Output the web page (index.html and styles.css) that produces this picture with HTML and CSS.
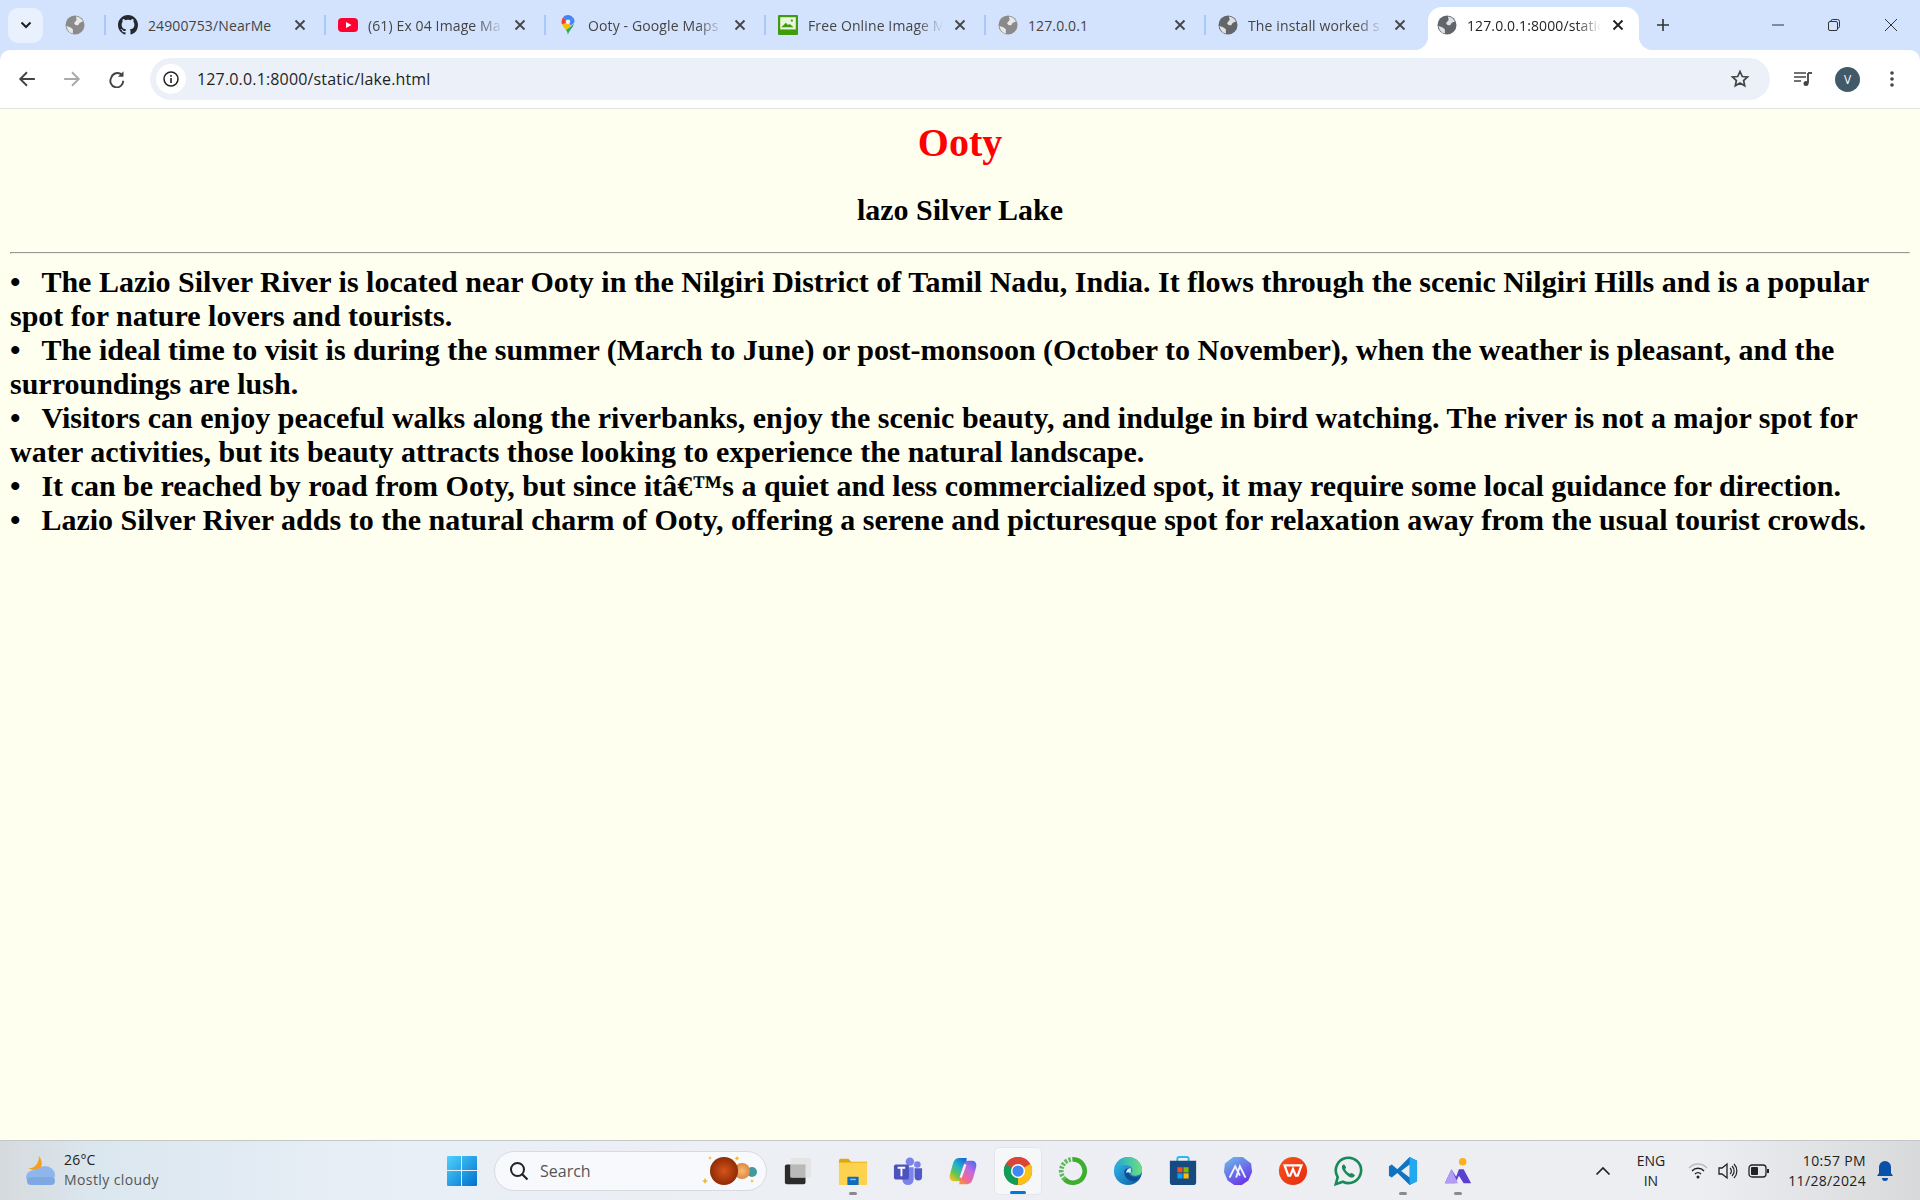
FILE: index.html
```html
<!DOCTYPE html>
<html lang="en">
<head>
    <meta charset="UTF-8">
    <title>127.0.0.1:8000/static/lake.html</title>
    <link rel="stylesheet" href="styles.css">
</head>
<body>
    <svg class="defs" width="0" height="0">
        <symbol id="globe" viewBox="0 0 20 20">
            <circle cx="10" cy="10" r="9.500" fill="currentColor"/>
            <path d="M11 1.500c3 .5 5.500 2 7 5-2 1-3.500 .5-4 2.500s-3.500 1.500-4.500 0 1.500-2.500 2-4-1-2.500-.5-3.500zM1.500 11c2 .5 4 1 6 3 1 1 0 2.500 .5 4.500-3.500-.5-6-3.500-6.500-7.500z" fill="#fff" opacity="0.8"/>
        </symbol>
        <symbol id="cross" viewBox="0 0 12 12">
            <path d="M1.500 1.500l9 9M10.500 1.500l-9 9" stroke="currentColor" stroke-width="1.800" fill="none"/>
        </symbol>
    </svg>

    <header class="browser-top">
        <div class="tabstrip">
            <div class="tab-search">
                <svg width="12" height="8" viewBox="0 0 12 8"><path d="M1.500 1.500L6 6l4.500-4.500" stroke="#1f1f1f" stroke-width="2" fill="none"/></svg>
            </div>
            <div class="tab-pinned"><svg class="fav globe-icon"><use href="#globe"/></svg></div>

            <div class="tab">
                <svg class="fav" viewBox="0 0 16 16"><path fill="#24292f" d="M8 0C3.580 0 0 3.580 0 8c0 3.540 2.290 6.530 5.470 7.590.4.070.55-.17.55-.38 0-.19-.01-.82-.01-1.490-2.010.37-2.530-.49-2.690-.94-.09-.23-.48-.94-.82-1.130-.28-.15-.68-.52-.01-.53.63-.01 1.080.58 1.230.82.72 1.210 1.870.87 2.330.66.070-.52.28-.87.51-1.070-1.780-.2-3.640-.89-3.640-3.950 0-.87.31-1.590.82-2.150-.08-.2-.36-1.020.08-2.120 0 0 .67-.21 2.200.82.64-.18 1.320-.27 2-.27s1.360.09 2 .27c1.530-1.040 2.200-.82 2.200-.82.44 1.100.16 1.920.08 2.120.51.56.82 1.270.82 2.150 0 3.070-1.870 3.750-3.650 3.950.29.25.54.73.54 1.480 0 1.070-.01 1.930-.01 2.200 0 .21.15.46.55.38A8.010 8.010 0 0016 8c0-4.420-3.580-8-8-8z"/></svg>
                <span class="tab-title plain">24900753/NearMe</span>
                <svg class="tab-close"><use href="#cross"/></svg>
            </div>
            <div class="tab">
                <svg class="fav" viewBox="0 0 20 20"><rect x="0" y="3" width="20" height="14" rx="4" fill="#ff0033"/><path d="M8 7l5.500 3L8 13z" fill="#fff"/></svg>
                <span class="tab-title">(61) Ex 04 Image Ma</span>
                <svg class="tab-close"><use href="#cross"/></svg>
            </div>
            <div class="tab">
                <svg class="fav" viewBox="0 0 20 20">
                    <path d="M10 0c-2 0-3.700.9-4.800 2.300L10 7.500l5-5C13.800 1 12 0 10 0z" fill="#4285f4"/>
                    <path d="M5.200 2.300A6.500 6.500 0 003.500 6.800c0 1 .2 1.800.6 2.600l5.900-2z" fill="#ea4335"/>
                    <path d="M15 2.500l-5 5 3 3 3-2.500c.3-.7.500-1.400.500-1.700 0-1.500-.6-2.800-1.500-3.800z" fill="#4285f4"/>
                    <path d="M4.100 9.400C5 11.500 6.800 13.300 8 15l5-4.500-3-3z" fill="#fbbc04"/>
                    <path d="M8 15c.9 1.300 1.700 2.600 2 5 .4-2.500 1.500-4 2.700-5.500 1.200-1.500 2.500-3 3.300-5.500L8 15z" fill="#34a853"/>
                    <circle cx="10" cy="6.800" r="2.300" fill="#fff" opacity="0.9"/>
                </svg>
                <span class="tab-title">Ooty - Google Maps</span>
                <svg class="tab-close"><use href="#cross"/></svg>
            </div>
            <div class="tab">
                <svg class="fav" viewBox="0 0 18 18"><rect width="18" height="18" rx="1" fill="#3f9c0a"/><rect x="2" y="2" width="14" height="11" fill="#e9f5de"/><path d="M3 11l4-4 2 2 1.500-1 3.500 3z" fill="#3f9c0a"/><circle cx="12.500" cy="5" r="1" fill="#3f9c0a"/></svg>
                <span class="tab-title">Free Online Image M</span>
                <svg class="tab-close"><use href="#cross"/></svg>
            </div>
            <div class="tab">
                <svg class="fav globe-icon"><use href="#globe"/></svg>
                <span class="tab-title plain">127.0.0.1</span>
                <svg class="tab-close"><use href="#cross"/></svg>
            </div>
            <div class="tab">
                <svg class="fav globe-icon dark"><use href="#globe"/></svg>
                <span class="tab-title">The install worked s</span>
                <svg class="tab-close"><use href="#cross"/></svg>
            </div>
            <div class="tab active">
                <svg class="fav globe-icon dark"><use href="#globe"/></svg>
                <span class="tab-title">127.0.0.1:8000/static</span>
                <svg class="tab-close"><use href="#cross"/></svg>
            </div>

            <svg class="new-tab" width="14" height="14" viewBox="0 0 14 14"><path d="M7 1v12M1 7h12" stroke="#333" stroke-width="1.600"/></svg>

            <div class="window-btns">
                <svg width="12" height="12" viewBox="0 0 12 12"><path d="M0 6h12" stroke="#333"/></svg>
                <svg width="12" height="12" viewBox="0 0 12 12"><rect x="0.500" y="2.500" width="9" height="9" rx="1.500" fill="none" stroke="#333"/><path d="M3 2.500v-.500a1.500 1.500 0 011.500-1.500h5a2 2 0 012 2v5a1.500 1.500 0 01-1.500 1.500" fill="none" stroke="#333"/></svg>
                <svg width="14" height="14" viewBox="0 0 14 14"><path d="M1 1l12 12M13 1L1 13" stroke="#333"/></svg>
            </div>
        </div>

        <div class="toolbar">
            <svg class="nav-btn" viewBox="0 0 16 16"><path d="M15 8H2M8 2L2 8l6 6" fill="none" stroke="#444" stroke-width="1.700"/></svg>
            <svg class="nav-btn" viewBox="0 0 16 16"><path d="M1 8h13M8 2l6 6-6 6" fill="none" stroke="#aaa" stroke-width="1.700"/></svg>
            <svg class="nav-btn" viewBox="0 0 16 16"><path d="M13.500 9.500A5.700 5.700 0 112.800 7 5.700 5.700 0 0112.500 4.500" fill="none" stroke="#444" stroke-width="1.700"/><path d="M13.800 1v5h-5z" fill="#444"/></svg>
            <div class="omnibox">
                <span class="site-info">
                    <svg width="16" height="16" viewBox="0 0 16 16"><circle cx="8" cy="8" r="7" fill="none" stroke="#222" stroke-width="1.500"/><path d="M8 7v5M8 4v1.800" stroke="#222" stroke-width="1.600"/></svg>
                </span>
                <span class="url">127.0.0.1:8000/static/lake.html</span>
                <svg class="star" width="20" height="20" viewBox="0 0 20 20"><path d="M10 2.500l2.300 5 5.200.5-3.900 3.500 1.100 5.300-4.700-2.700-4.700 2.700 1.100-5.300L2.500 8l5.200-.5z" fill="none" stroke="#444" stroke-width="1.700"/></svg>
            </div>
            <svg class="tool-icon" width="20" height="18" viewBox="0 0 20 18"><path d="M1 3h12M1 7h12M1 11h7" stroke="#444" stroke-width="1.600"/><path d="M15 3v10" stroke="#444" stroke-width="1.800"/><path d="M15 3h4" stroke="#444" stroke-width="1.800"/><circle cx="13" cy="13.500" r="2.500" fill="#444"/></svg>
            <span class="avatar">V</span>
            <svg class="menu-dots" width="4" height="18" viewBox="0 0 4 18"><circle cx="2" cy="3" r="1.800" fill="#444"/><circle cx="2" cy="9" r="1.800" fill="#444"/><circle cx="2" cy="15" r="1.800" fill="#444"/></svg>
        </div>
    </header>

    <main class="page">
        <h1>Ooty</h1>
        <h2>lazo Silver Lake</h2>
        <hr>
        <p class="notes">
            <span class="dot">&bull;&nbsp;&nbsp;&nbsp;</span>The Lazio Silver River is located near Ooty in the Nilgiri District of Tamil Nadu, India. It flows through the scenic Nilgiri Hills and is a popular spot for nature lovers and tourists.<br>
            <span class="dot">&bull;&nbsp;&nbsp;&nbsp;</span>The ideal time to visit is during the summer (March to June) or post-monsoon (October to November), when the weather is pleasant, and the surroundings are lush.<br>
            <span class="dot">&bull;&nbsp;&nbsp;&nbsp;</span>Visitors can enjoy peaceful walks along the riverbanks, enjoy the scenic beauty, and indulge in bird watching. The river is not a major spot for water activities, but its beauty attracts those looking to experience the natural landscape.<br>
            <span class="dot">&bull;&nbsp;&nbsp;&nbsp;</span>It can be reached by road from Ooty, but since itâ€™s a quiet and less commercialized spot, it may require some local guidance for direction.<br>
            <span class="dot">&bull;&nbsp;&nbsp;&nbsp;</span>Lazio Silver River adds to the natural charm of Ooty, offering a serene and picturesque spot for relaxation away from the usual tourist crowds.
        </p>
    </main>

    <footer class="taskbar">
        <div class="weather">
            <svg width="32" height="32" viewBox="0 0 32 32">
                <path d="M15 1c3 4 4 9 1 13-3 2-9 1-12-1 5 1 11-3 11-12z" fill="#f3a11f"/>
                <ellipse cx="11" cy="22" rx="9" ry="7" fill="#8fb6ea"/>
                <ellipse cx="21" cy="20" rx="10" ry="9" fill="#8fb6ea"/>
                <rect x="3" y="22" width="28" height="8" rx="4" fill="#7ea8e4"/>
            </svg>
            <div class="weather-text">
                <span class="temp">26°C</span>
                <span class="cond">Mostly cloudy</span>
            </div>
        </div>

        <div class="apps">
            <svg class="win-logo" width="30" height="30" viewBox="0 0 30 30">
                <defs><linearGradient id="winGrad" x1="0" y1="0" x2="1" y2="1"><stop offset="0" stop-color="#4fd2fb"/><stop offset="1" stop-color="#0070d0"/></linearGradient></defs>
                <path d="M1 0h13v14H0V1a1 1 0 011-1zM15 0h14a1 1 0 011 1v13H15zM0 15h14v15H1a1 1 0 01-1-1zM15 15h15v14a1 1 0 01-1 1H15z" fill="url(#winGrad)"/>
            </svg>
            <div class="search-pill">
                <svg width="20" height="20" viewBox="0 0 20 20"><circle cx="8.500" cy="8.500" r="6.500" fill="none" stroke="#222" stroke-width="2"/><path d="M13 13l5.500 5.500" stroke="#222" stroke-width="2.200"/></svg>
                <span class="search-label">Search</span>
                <svg class="planets" width="60" height="36" viewBox="0 0 60 36">
                    <defs>
                        <radialGradient id="marsGrad"><stop offset="0" stop-color="#d8521a"/><stop offset="1" stop-color="#8e2c04"/></radialGradient>
                        <radialGradient id="peachGrad"><stop offset="0" stop-color="#f7bb78"/><stop offset="1" stop-color="#e0873e"/></radialGradient>
                    </defs>
                    <circle cx="52" cy="19" r="5" fill="#3f9aa0"/>
                    <circle cx="42" cy="18" r="8" fill="url(#peachGrad)"/>
                    <circle cx="24" cy="18" r="14" fill="url(#marsGrad)"/>
                    <path d="M5 25l1 2 2 1-2 1-1 2-1-2-2-1 2-1zM37 3l.8 1.600 1.600.8-1.600.8-.8 1.600-.8-1.600-1.600-.8 1.600-.8zM52 26l.7 1.400 1.300.6-1.300.6-.7 1.400-.7-1.400-1.300-.6 1.300-.6zM10 3l.7 1.400 1.300.6-1.300.6-.7 1.400-.7-1.400-1.300-.6 1.300-.6z" fill="#eeb92e"/>
                </svg>
            </div>
            <div class="app-row">
                <div class="app"><svg viewBox="0 0 32 32"><rect x="2" y="9" width="22" height="21" rx="2" fill="#2b2b2b"/><rect x="8" y="2" width="22" height="21" rx="2" fill="#e4e4e4"/><rect x="8" y="9" width="16" height="14" fill="#b9b9b9"/></svg></div>
                <div class="app open"><svg viewBox="0 0 32 32"><path d="M1 5a2 2 0 012-2h8l3 3h17v6H1z" fill="#e5a50a"/><rect x="1" y="7" width="30" height="24" rx="1" fill="#fcd24f"/><rect x="10" y="22" width="12" height="9" rx="1" fill="#0f6cbd"/><path d="M13 25h6" stroke="#7ec4f5" stroke-width="1.500"/></svg></div>
                <div class="app"><svg viewBox="0 0 32 32"><circle cx="26" cy="9" r="3.500" fill="#7b83eb"/><circle cx="18" cy="6" r="4.500" fill="#7b83eb"/><path d="M10 12h12v13a6 6 0 01-12 0z" fill="#7b83eb"/><path d="M23 13h8v9a4 4 0 01-8 0z" fill="#5059c9"/><rect x="1" y="9" width="16" height="16" rx="2" fill="#4b53bc"/><path d="M5 12.500h8M9 12.500v9" stroke="#fff" stroke-width="2"/></svg></div>
                <div class="app"><svg viewBox="0 0 32 32">
                    <defs><linearGradient id="copA" x1="0.800" y1="0" x2="0.200" y2="1"><stop offset="0" stop-color="#1768d8"/><stop offset="0.400" stop-color="#1fb6c8"/><stop offset="0.700" stop-color="#62c554"/><stop offset="1" stop-color="#f6c21a"/></linearGradient><linearGradient id="copB" x1="0.800" y1="0" x2="0.200" y2="1"><stop offset="0" stop-color="#4f6ae8"/><stop offset="0.400" stop-color="#c66ae0"/><stop offset="0.800" stop-color="#f26a8c"/><stop offset="1" stop-color="#f7913c"/></linearGradient></defs>
                    <path d="M20 2H12C8 2 6 5 5 9L2 20c-1 4 1 7 4 7h4c3 0 5-2 6-5l3-11c1-4 .5-7 1-9z" fill="url(#copA)"/>
                    <path d="M12 30h8c4 0 6-3 7-7l3-11c1-4-1-7-4-7h-4c-3 0-5 2-6 5l-3 11c-1 4-.5 7-1 9z" fill="url(#copB)"/>
                    <path d="M18.500 9l-5 14" stroke="#f6f1f8" stroke-width="2.500" fill="none"/>
                </svg></div>
                <div class="app current"><svg viewBox="0 0 32 32">
                    <circle cx="16" cy="16" r="15" fill="#db4437"/>
                    <path d="M16 16L29 8.500A15 15 0 0116 31z" fill="#fbc116"/>
                    <path d="M16 16L16 31A15 15 0 013 8.500z" fill="#109d58"/>
                    <path d="M3 8.500A15 15 0 0129 8.500H16z" fill="#db4437"/>
                    <circle cx="16" cy="16" r="7.500" fill="#fff"/><circle cx="16" cy="16" r="6" fill="#4285f4"/>
                </svg></div>
                <div class="app"><svg viewBox="0 0 32 32">
                    <path d="M16 3.500a12.500 12.500 0 11-9 21.200" fill="none" stroke="#3fae2f" stroke-width="5"/>
                    <path d="M7 24.700A12.500 12.500 0 0116 3.500" fill="none" stroke="#5db85a" stroke-width="5" stroke-dasharray="2.500 1.500"/>
                </svg></div>
                <div class="app"><svg viewBox="0 0 32 32">
                    <defs><linearGradient id="edgeA" x1="0" y1="0" x2="1" y2="1"><stop offset="0" stop-color="#35c1f1"/><stop offset="1" stop-color="#0b57a4"/></linearGradient><linearGradient id="edgeB" x1="0" y1="0.500" x2="1" y2="0.500"><stop offset="0" stop-color="#1fa8d8"/><stop offset="1" stop-color="#6fe07a"/></linearGradient></defs>
                    <circle cx="16" cy="16" r="15" fill="url(#edgeA)"/>
                    <path d="M12 17c0 6 6 11 12 10 2-1 4-3 6-6-3 2-8 2-11 0-3-2-3-6-2-8-2 0-5 1-5 4z" fill="#0c4f94"/>
                    <path d="M2 13C4 5 10 1 16 1c8 0 15 6 15 14 0 4-3 6-7 6-3 0-5-1-5-3 3-2 2-7-3-8-6-1-11 0-14 3z" fill="url(#edgeB)"/>
                    <path d="M19 18c-2-1-4-1-5 0 0-3 2-5 5-5z" fill="#dff1f7"/>
                </svg></div>
                <div class="app"><svg viewBox="0 0 32 32"><path d="M10 6V3a2 2 0 012-2h8a2 2 0 012 2v3" fill="none" stroke="#30b5ee" stroke-width="2"/><path d="M2 5h28v23a3 3 0 01-3 3H5a3 3 0 01-3-3z" fill="#174a80"/><rect x="10" y="12" width="5.500" height="5.500" fill="#f25022"/><rect x="16.500" y="12" width="5.500" height="5.500" fill="#7fba00"/><rect x="10" y="18.500" width="5.500" height="5.500" fill="#00a4ef"/><rect x="16.500" y="18.500" width="5.500" height="5.500" fill="#ffb900"/></svg></div>
                <div class="app"><svg viewBox="0 0 32 32">
                    <defs><linearGradient id="genA" x1="0" y1="0" x2="0.600" y2="1"><stop offset="0" stop-color="#6cc0ea"/><stop offset="1" stop-color="#6a38e8"/></linearGradient></defs>
                    <path d="M11 1h10l9 7 1 9-4 9-7 5h-8l-7-5-4-9 1-9z" fill="url(#genA)"/>
                    <path d="M7 23l6-12 5 10M14 23l4-12 6 12" fill="none" stroke="#eef4ff" stroke-width="2"/>
                </svg></div>
                <div class="app"><svg viewBox="0 0 32 32">
                    <defs><linearGradient id="wpsA" x1="0" y1="0" x2="1" y2="1"><stop offset="0" stop-color="#f7541d"/><stop offset="1" stop-color="#e72a10"/></linearGradient></defs>
                    <circle cx="16" cy="16" r="15" fill="url(#wpsA)"/>
                    <path d="M7 10h18l-4 11h-2l-3-7-3 7h-2z" fill="none" stroke="#fff" stroke-width="2.400"/>
                </svg></div>
                <div class="app"><svg viewBox="0 0 32 32"><path d="M3 30l2-7.500a13.500 13.500 0 115.500 5z" fill="none" stroke="#178a58" stroke-width="2.800"/><path d="M11 9c-2 1-2 4 0 7s6 7 9 7c2 0 4-2 3-3l-3-2-2 1c-2-1-4-3-5-5l1-2-2-3z" fill="#178a58"/></svg></div>
                <div class="app open"><svg viewBox="0 0 32 32"><path d="M23 1l8 4v22l-8 4-13-13-6 5-3-2v-10l3-2 6 5z" fill="#0e74c2"/><path d="M23 1l8 4v22l-8 4z" fill="#22a8ee"/><path d="M23 9l-9 7 9 7z" fill="#e9ecf1"/></svg></div>
                <div class="app open"><svg viewBox="0 0 32 32"><circle cx="21" cy="6" r="4" fill="#f8b21a"/><path d="M2 29l7-15 5 8 3-8 5 0 8 15H22l-5-8-4 8z" fill="#5a3fd0"/><path d="M9 14l7 15H2z" fill="#b29cf5"/></svg></div>
            </div>
        </div>

        <div class="tray">
            <svg width="16" height="10" viewBox="0 0 16 10"><path d="M1.500 8.500L8 2l6.500 6.500" fill="none" stroke="#222" stroke-width="1.700"/></svg>
            <div class="lang">ENG<br>IN</div>
            <svg class="tray-icon" width="20" height="18" viewBox="0 0 20 18"><path d="M1 6a12 12 0 0118 0" fill="none" stroke="#bbb" stroke-width="1.400"/><path d="M4 9a8 8 0 0112 0M7 12a4 4 0 016 0" fill="none" stroke="#222" stroke-width="1.400"/><circle cx="10" cy="15" r="1.500" fill="#222"/></svg>
            <svg class="tray-icon" width="20" height="18" viewBox="0 0 20 18"><path d="M1 6h3l5-4v14l-5-4H1z" fill="none" stroke="#222" stroke-width="1.300"/><path d="M12 6a4 4 0 010 6M14 4a7 7 0 010 10M16 2a10 10 0 010 14" fill="none" stroke="#222" stroke-width="1.200"/></svg>
            <svg class="tray-icon" width="22" height="14" viewBox="0 0 22 14"><rect x="1" y="1" width="17" height="12" rx="3" fill="none" stroke="#222" stroke-width="1.300"/><rect x="3" y="3" width="7" height="8" rx="1" fill="#222"/><rect x="19" y="5" width="2" height="4" fill="#222"/></svg>
            <div class="clock">10:57 PM<br>11/28/2024</div>
            <svg width="18" height="22" viewBox="0 0 18 22"><path d="M9 1a6 6 0 00-6 6v6l-2 3h16l-2-3V7a6 6 0 00-6-6z" fill="#0a4fa8"/><path d="M6 18a3 3 0 006 0z" fill="#0a4fa8"/></svg>
        </div>
    </footer>
</body>
</html>
```

FILE: styles.css
```css
html, body {
    height: 100%;
    margin: 0;
}

body {
    display: flex;
    flex-direction: column;
    overflow: hidden;
    font-family: "Liberation Serif", serif;
    background-color: ivory;
}

.defs {
    display: none;
}

/* browser top */
.browser-top {
    flex-shrink: 0;
    background-color: #d3e3fd;
}

.tabstrip {
    display: flex;
    align-items: center;
    height: 50px;
    padding-left: 8px;
    font-family: "Open Sans", sans-serif;
    font-size: 14px;
    letter-spacing: 0.12px;
    color: #444;
}

.tab-search {
    display: flex;
    align-items: center;
    justify-content: center;
    width: 35px;
    height: 35px;
    border-radius: 10px;
    background-color: #e9f0fe;
}

.tab-pinned {
    display: flex;
    align-items: center;
    justify-content: center;
    width: 61px;
    height: 36px;
    padding-left: 3px;
    box-sizing: border-box;
}

.fav {
    width: 20px;
    height: 20px;
    flex-shrink: 0;
}

.globe-icon {
    color: #8a8a8a;
}

.globe-icon.dark {
    color: #62666b;
}

.tab {
    display: flex;
    align-items: center;
    gap: 10px;
    width: 220px;
    height: 20px;
    flex-shrink: 0;
    padding: 0 18px 0 12px;
    box-sizing: border-box;
    border-left: 2px solid #a8c7fa;
}

.tab-title {
    flex: 1;
    margin-right: -8px;
    overflow: hidden;
    white-space: nowrap;
    mask-image: linear-gradient(to right, #000 76%, transparent 94%);
}

.tab-title.plain {
    mask-image: none;
}

.tab-close {
    width: 12px;
    height: 12px;
    flex-shrink: 0;
    color: #444;
}

.tab.active {
    position: relative;
    align-self: flex-end;
    width: 211px;
    height: 43px;
    margin-left: 4px;
    padding: 0 15px 7px 9px;
    border-left: 0;
    border-radius: 14px 14px 0 0;
    background-color: #fff;
    color: #1f1f1f;
}

.tab.active::before,
.tab.active::after {
    content: "";
    position: absolute;
    bottom: 0;
    width: 14px;
    height: 14px;
}

.tab.active::before {
    left: -14px;
    background: radial-gradient(circle at 0 0, transparent 14px, #fff 14.5px);
}

.tab.active::after {
    right: -14px;
    background: radial-gradient(circle at 100% 0, transparent 14px, #fff 14.5px);
}

.tab.active .tab-close {
    color: #1f1f1f;
}

.new-tab {
    margin-left: 17px;
}

.window-btns {
    display: flex;
    align-items: center;
    gap: 44px;
    margin-left: auto;
    padding-right: 22px;
}

.toolbar {
    display: flex;
    align-items: center;
    height: 59px;
    box-sizing: border-box;
    border-bottom: 1px solid #e1e3de;
    border-radius: 10px 10px 0 0;
    background-color: #fff;
}

.nav-btn {
    width: 18px;
    height: 18px;
    margin-left: 19px;
    margin-right: 8px;
}

.nav-btn:first-child {
    margin-left: 18px;
}

.omnibox {
    display: flex;
    align-items: center;
    width: 1620px;
    height: 42px;
    margin-left: 16px;
    border-radius: 21px;
    background-color: #ebf0f9;
}

.site-info {
    display: flex;
    align-items: center;
    justify-content: center;
    width: 30px;
    height: 30px;
    margin-left: 6px;
    border-radius: 50%;
    background-color: #fff;
}

.url {
    margin-left: 11px;
    font-family: "Open Sans", sans-serif;
    font-size: 16px;
    letter-spacing: 0.16px;
    color: #1f1f1f;
}

.star {
    margin-left: auto;
    margin-right: 20px;
}

.tool-icon {
    margin-left: 23px;
}

.avatar {
    display: flex;
    align-items: center;
    justify-content: center;
    width: 25px;
    height: 25px;
    margin-left: 22px;
    border-radius: 50%;
    background-color: #42596a;
    font-family: "Open Sans", sans-serif;
    font-size: 12px;
    color: #fff;
}

.menu-dots {
    margin-left: 30px;
}

/* page content */
.page {
    flex: 1;
    padding: 10px;
    overflow: hidden;
    background-color: ivory;
    color: #000;
}

h1 {
    margin: 0 0 27px;
    font-size: 40px;
    color: red;
    text-align: center;
}

h2 {
    margin: 25px 0;
    font-size: 30px;
    text-align: center;
}

hr {
    margin: 0 0 11px;
}

.notes {
    margin: 0;
    font-size: 30px;
    font-weight: bold;
}

.dot {
    letter-spacing: -0.4px;
}

/* windows taskbar */
.taskbar {
    display: flex;
    align-items: center;
    height: 60px;
    flex-shrink: 0;
    box-sizing: border-box;
    border-top: 1px solid #c3c6cb;
    background: linear-gradient(90deg, #d6dadd 0, #dbe7ef 100px, #e9eff7 400px, #eceff4 700px, #eceef2 1700px, #d8d9da 100%);
    font-family: "Open Sans", sans-serif;
    color: #222;
}

.weather {
    display: flex;
    align-items: center;
    gap: 8px;
    width: 447px;
    flex-shrink: 0;
    padding-left: 24px;
    box-sizing: border-box;
}

.weather-text {
    display: flex;
    flex-direction: column;
    margin-top: -2px;
    font-size: 14px;
    line-height: 20px;
    letter-spacing: 0.2px;
}

.cond {
    letter-spacing: 0.4px;
    color: #555;
}

.apps {
    display: flex;
    align-items: center;
}

.win-logo {
    margin-right: 17px;
}

.search-pill {
    display: flex;
    align-items: center;
    width: 273px;
    height: 40px;
    box-sizing: border-box;
    margin-right: 7px;
    padding: 0 6px 0 14px;
    border: 1px solid #d8dadf;
    border-radius: 20px;
    background-color: #f8f9fc;
}

.search-label {
    margin-left: 11px;
    font-size: 16px;
    color: #555;
}

.planets {
    margin-left: auto;
}

.app-row {
    display: flex;
    align-items: center;
    gap: 7px;
}

.app {
    position: relative;
    display: flex;
    align-items: center;
    justify-content: center;
    width: 48px;
    height: 48px;
    border-radius: 5px;
}

.app svg {
    width: 30px;
    height: 30px;
}

.app.current {
    border: 1px solid #e4e6ea;
    box-sizing: border-box;
    background-color: #f6f7f9;
}

.app.open::after,
.app.current::after {
    content: "";
    position: absolute;
    bottom: 0;
    left: 50%;
    width: 8px;
    height: 3px;
    margin-left: -4px;
    border-radius: 2px;
    background-color: #8a8a8a;
}

.app.current::after {
    width: 16px;
    margin-left: -8px;
    background-color: #0078d4;
}

.tray {
    display: flex;
    align-items: center;
    margin-left: auto;
    padding-right: 26px;
    font-size: 14px;
    line-height: 20px;
}

.lang {
    margin-left: 26px;
    text-align: center;
}

.tray-icon {
    margin-left: 10px;
}

.lang + .tray-icon {
    margin-left: 23px;
}

.clock {
    margin: 0 10px 0 18px;
    text-align: right;
    letter-spacing: 0.35px;
}
```
